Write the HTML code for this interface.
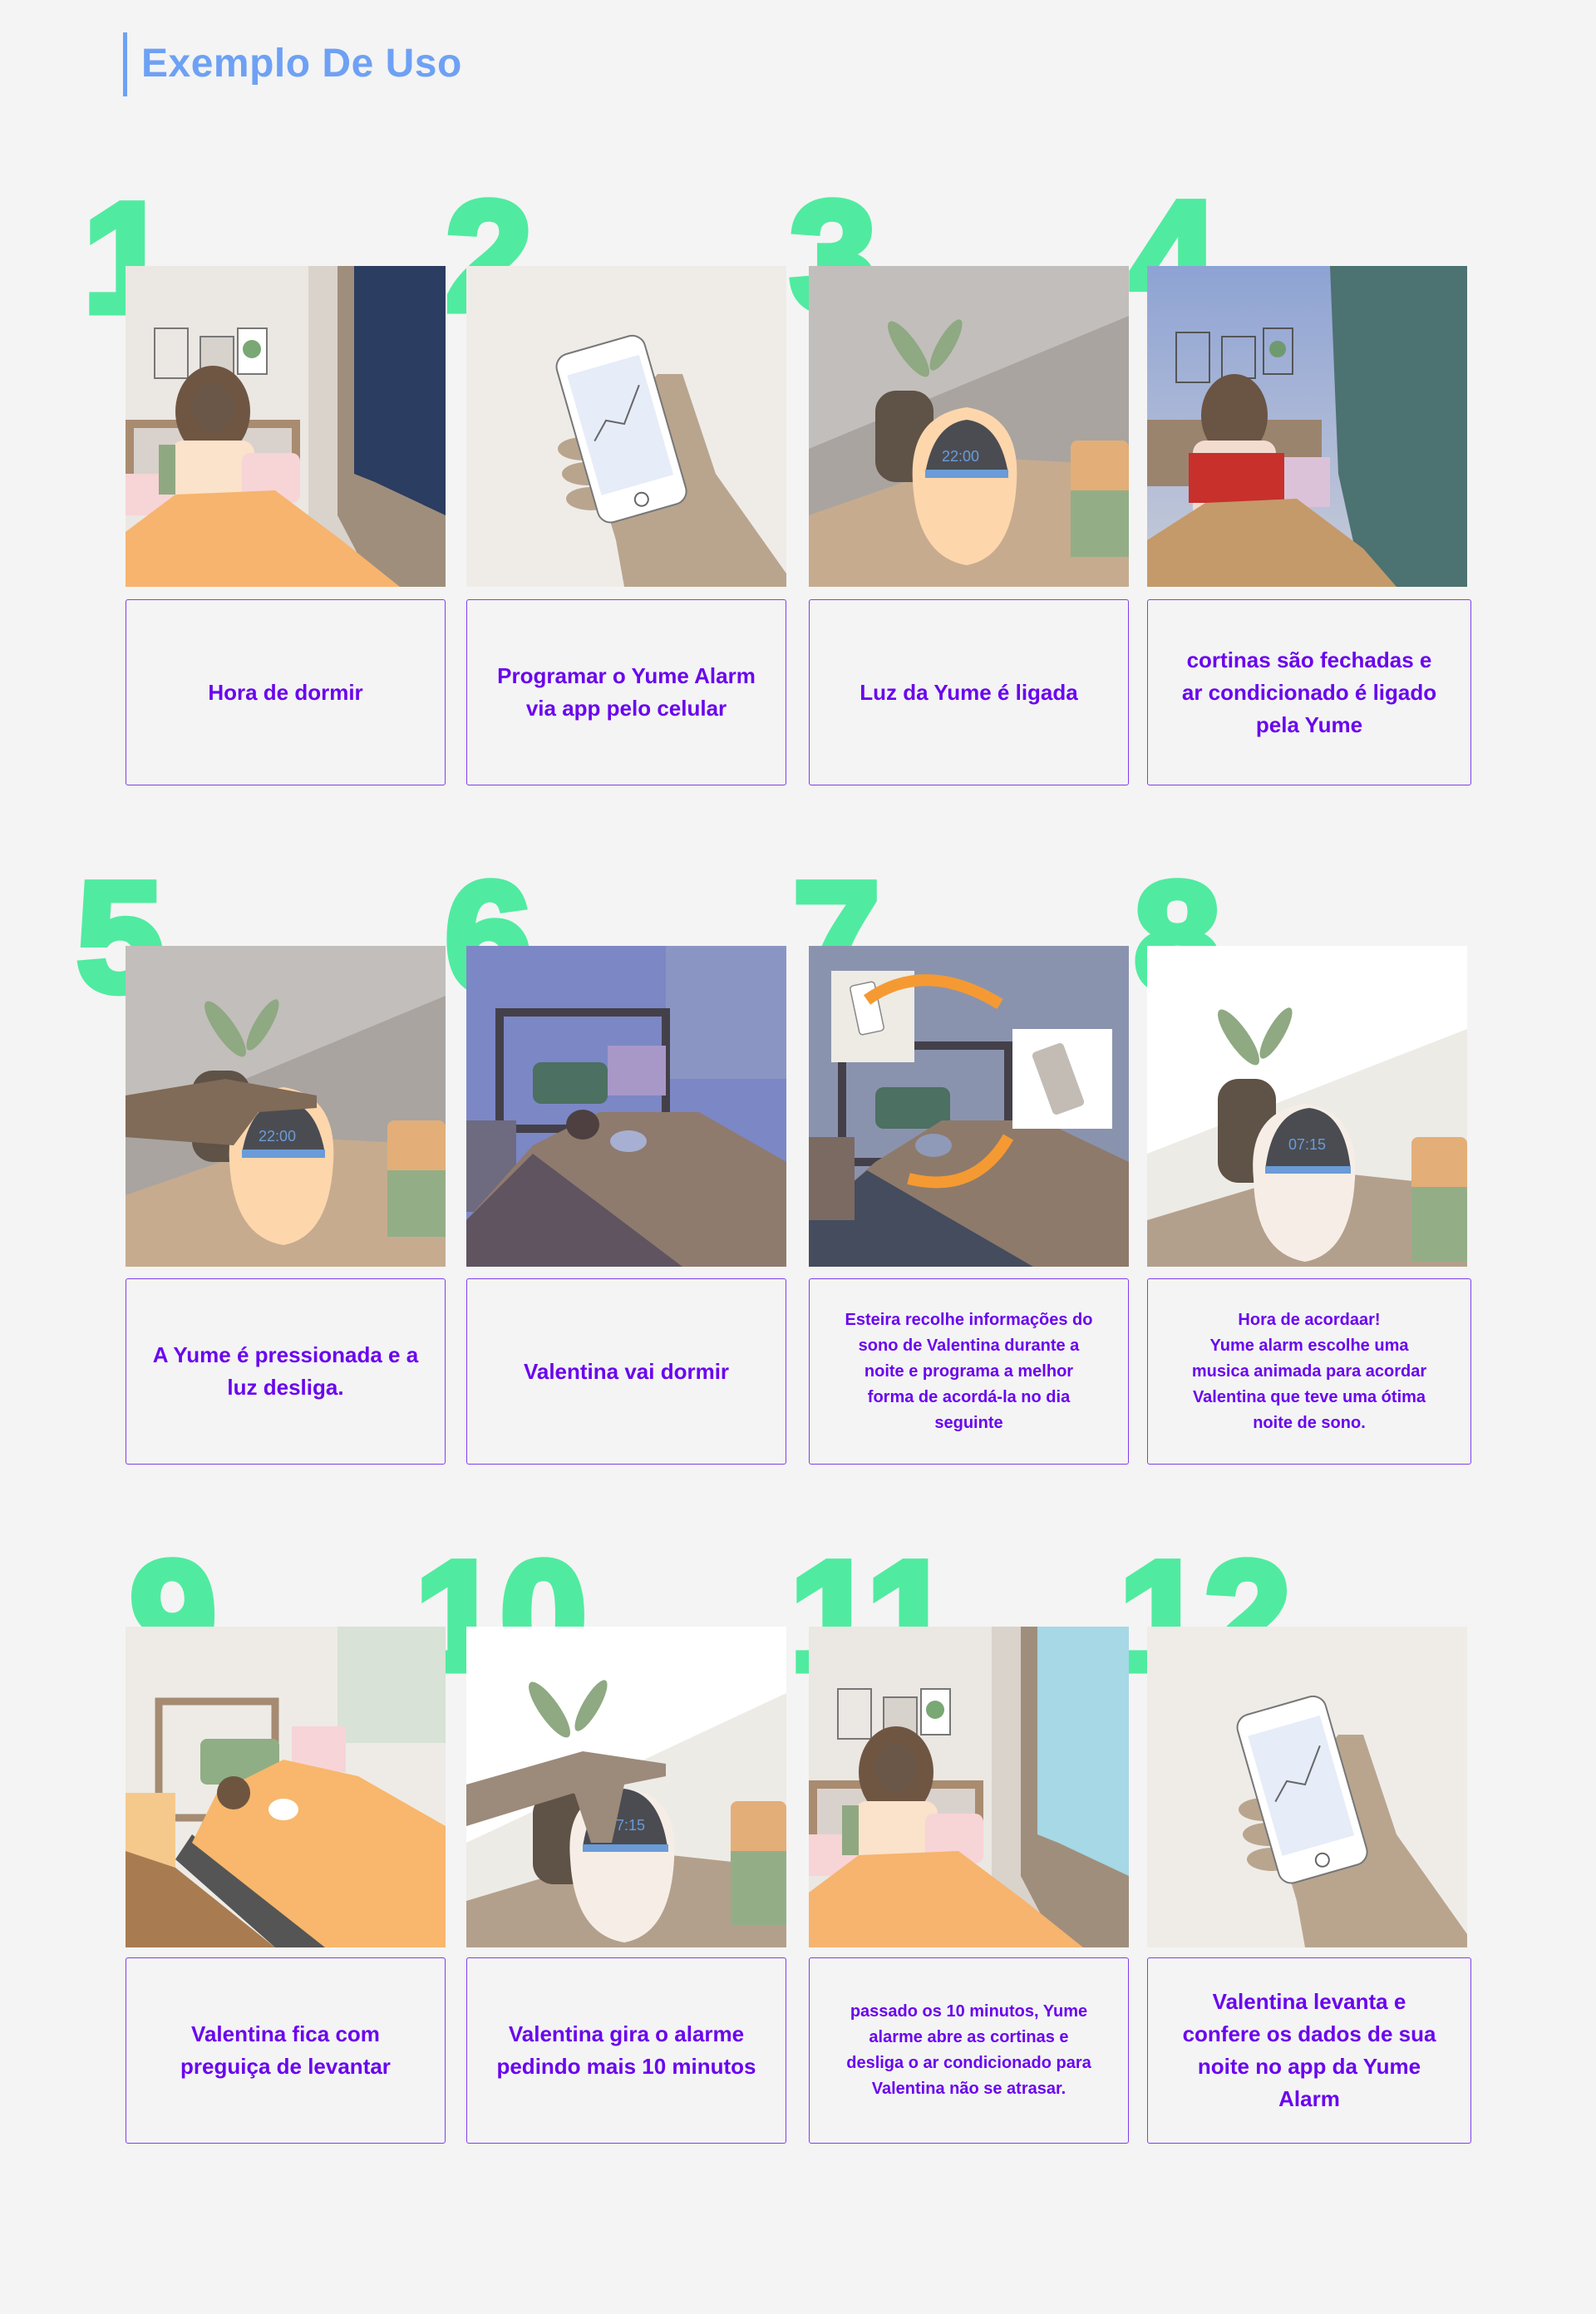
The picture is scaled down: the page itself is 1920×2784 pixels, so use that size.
<!DOCTYPE html>
<html><head><meta charset="utf-8">
<style>
*{margin:0;padding:0;box-sizing:border-box}
body{width:1920px;height:2784px;background:#f4f4f4;position:relative;overflow:hidden;font-family:"Liberation Sans",sans-serif}
.bar{position:absolute;left:148px;top:39px;width:5px;height:77px;background:#6ea1f4}
h1{position:absolute;left:170px;top:49px;font-size:48px;font-weight:bold;color:#6ea1f4;letter-spacing:0.5px}
.num{position:absolute;font-size:188px;font-weight:900;color:#50eba0;line-height:1;letter-spacing:-2px;-webkit-text-stroke:9px #50eba0}
.img{position:absolute;width:385px;height:386px;overflow:hidden}
.img svg{display:block;width:100%;height:100%}
.cap{position:absolute;width:385px;height:224px;border:1.5px solid #7f3ef0;border-radius:3px;display:flex;align-items:center;justify-content:center;text-align:center;color:#6a05ee;font-weight:bold;font-size:26px;line-height:39px;white-space:nowrap}
.cap.s{font-size:20px;line-height:31px}
</style></head><body>
<div class="bar"></div><h1>Exemplo De Uso</h1>

<div class="num" style="left:100px;top:216px">1</div>
<div class="num" style="left:536px;top:214px">2</div>
<div class="num" style="left:950px;top:214px">3</div>
<div class="num" style="left:1360px;top:214px">4</div>
<div class="num" style="left:92px;top:1033px">5</div>
<div class="num" style="left:535px;top:1033px">6</div>
<div class="num" style="left:954px;top:1033px">7</div>
<div class="num" style="left:1364px;top:1033px">8</div>
<div class="num" style="left:156px;top:1850px">9</div>
<div class="num" style="left:499px;top:1850px">10</div>
<div class="num" style="left:950px;top:1850px">11</div>
<div class="num" style="left:1346px;top:1850px">12</div>

<!-- Row 1 -->
<div class="img" style="left:151px;top:320px"><svg viewBox="0 0 385 386">
<rect width="385" height="386" fill="#ebe7e2"/><rect x="220" width="60" height="386" fill="#d9d3cc"/>
<polygon points="255,0 385,0 385,386 300,386 255,300" fill="#a08e7c"/><polygon points="275,0 385,0 385,300 300,260 275,250" fill="#2b3d60"/>
<rect x="35" y="75" width="40" height="60" fill="none" stroke="#777" stroke-width="2"/><rect x="90" y="85" width="40" height="50" fill="#d8d2cc" stroke="#777" stroke-width="2"/><rect x="135" y="75" width="35" height="55" fill="#fff" stroke="#777" stroke-width="2"/><circle cx="152" cy="100" r="11" fill="#7aa874"/>
<rect x="0" y="185" width="210" height="80" fill="#a98b70"/><rect x="10" y="195" width="190" height="80" fill="#d9d2cc"/>
<ellipse cx="105" cy="175" rx="45" ry="55" fill="#6f5643"/><ellipse cx="105" cy="170" rx="25" ry="30" fill="#6b5748"/>
<rect x="55" y="210" width="100" height="100" rx="15" fill="#fbe2cb"/><rect x="140" y="225" width="70" height="60" rx="10" fill="#f7d4d6"/><rect x="0" y="250" width="60" height="50" fill="#f7d4d6"/><rect x="40" y="215" width="20" height="60" fill="#90a882"/>
<polygon points="0,320 60,275 180,270 260,330 330,386 0,386" fill="#f6b46e"/></svg></div>
<div class="img" style="left:561px;top:320px"><svg viewBox="0 0 385 386">
<rect width="385" height="386" fill="#efece8"/>
<polygon points="150,230 230,130 260,130 300,250 385,370 385,386 190,386 180,330" fill="#b9a58e"/>
<ellipse cx="140" cy="220" rx="30" ry="14" fill="#b9a58e"/><ellipse cx="145" cy="250" rx="30" ry="14" fill="#b9a58e"/><ellipse cx="150" cy="280" rx="30" ry="14" fill="#b9a58e"/>
<g transform="rotate(-16 190 190)"><rect x="130" y="90" width="110" height="210" rx="16" fill="#fff" stroke="#777" stroke-width="2"/><rect x="140" y="115" width="90" height="150" fill="#e6ecf8"/><polyline points="150,200 170,180 190,190 220,150" fill="none" stroke="#666" stroke-width="2"/><circle cx="185" cy="283" r="8" fill="none" stroke="#666" stroke-width="2"/></g></svg></div>
<div class="img" style="left:973px;top:320px"><svg viewBox="0 0 385 386">
<rect width="385" height="386" fill="#c2bebb"/><polygon points="0,220 385,60 385,386 0,386" fill="#a9a4a0"/>
<polygon points="0,300 200,230 385,240 385,386 0,386" fill="#c6ab8f"/>
<ellipse cx="120" cy="100" rx="12" ry="40" fill="#8fa983" transform="rotate(-35 120 100)"/><ellipse cx="165" cy="95" rx="10" ry="35" fill="#8fa983" transform="rotate(30 165 95)"/>
<rect x="80" y="150" width="70" height="110" rx="25" fill="#5f5246"/>
<path d="M125,260 Q120,180 190,170 Q255,180 250,260 Q245,350 190,360 Q130,350 125,260Z" fill="#fdd6ac"/>
<path d="M140,250 Q150,190 190,185 Q230,190 240,250Z" fill="#4a4c52"/><rect x="140" y="245" width="100" height="10" fill="#6b9bd8"/><text x="160" y="235" font-size="18" fill="#6b9bd8">22:00</text>
<rect x="315" y="210" width="70" height="140" rx="8" fill="#e3ae78"/><rect x="315" y="270" width="70" height="80" fill="#93ae87"/></svg></div>
<div class="img" style="left:1380px;top:320px"><svg viewBox="0 0 385 386"><defs><linearGradient id="g4" x1="0" y1="0" x2="0" y2="1"><stop offset="0" stop-color="#8ea3d4"/><stop offset="1" stop-color="#c8ccd8"/></linearGradient></defs>
<rect width="385" height="386" fill="url(#g4)"/><polygon points="220,0 385,0 385,386 260,386 230,250" fill="#4d7272"/>
<rect x="35" y="80" width="40" height="60" fill="none" stroke="#555" stroke-width="2"/><rect x="90" y="85" width="40" height="50" fill="none" stroke="#555" stroke-width="2"/><rect x="140" y="75" width="35" height="55" fill="none" stroke="#555" stroke-width="2"/><circle cx="157" cy="100" r="10" fill="#6f9a70"/>
<rect x="0" y="185" width="210" height="80" fill="#9b846e"/><ellipse cx="105" cy="180" rx="40" ry="50" fill="#6a5443"/>
<rect x="55" y="210" width="100" height="100" rx="15" fill="#f2dcd0"/><rect x="150" y="230" width="70" height="60" fill="#dcc2d8"/><rect x="50" y="225" width="115" height="60" fill="#c8302c"/>
<polygon points="0,330 70,285 180,280 260,340 300,386 0,386" fill="#c49a6a"/></svg></div>
<div class="cap" style="left:151px;top:721px">Hora de dormir</div>
<div class="cap" style="left:561px;top:721px">Programar o Yume Alarm<br>via app pelo celular</div>
<div class="cap" style="left:973px;top:721px">Luz da Yume é ligada</div>
<div class="cap" style="left:1380px;top:721px;width:390px">cortinas são fechadas e<br>ar condicionado é ligado<br>pela Yume</div>

<!-- Row 2 -->
<div class="img" style="left:151px;top:1138px"><svg viewBox="0 0 385 386">
<rect width="385" height="386" fill="#c2bebb"/><polygon points="0,220 385,60 385,386 0,386" fill="#a9a4a0"/>
<polygon points="0,300 200,230 385,240 385,386 0,386" fill="#c6ab8f"/>
<ellipse cx="120" cy="100" rx="12" ry="40" fill="#8fa983" transform="rotate(-35 120 100)"/><ellipse cx="165" cy="95" rx="10" ry="35" fill="#8fa983" transform="rotate(30 165 95)"/>
<rect x="80" y="150" width="70" height="110" rx="25" fill="#5f5246"/>
<path d="M125,260 Q120,180 190,170 Q255,180 250,260 Q245,350 190,360 Q130,350 125,260Z" fill="#fdd6ac"/>
<path d="M140,250 Q150,190 190,185 Q230,190 240,250Z" fill="#4a4c52"/><rect x="140" y="245" width="100" height="10" fill="#6b9bd8"/><text x="160" y="235" font-size="18" fill="#6b9bd8">22:00</text>
<polygon points="0,180 120,160 230,180 230,195 160,200 130,240 0,230" fill="#806a58"/>
<rect x="315" y="210" width="70" height="140" rx="8" fill="#e3ae78"/><rect x="315" y="270" width="70" height="80" fill="#93ae87"/></svg></div>
<div class="img" style="left:561px;top:1138px"><svg viewBox="0 0 385 386">
<rect width="385" height="386" fill="#7c87c6"/><rect x="240" width="145" height="160" fill="#8b95c4"/>
<rect x="40" y="80" width="200" height="140" fill="none" stroke="#44404a" stroke-width="10"/>
<rect x="80" y="140" width="90" height="50" rx="10" fill="#4c7062"/><rect x="170" y="120" width="70" height="60" fill="#a798c8"/>
<rect x="0" y="210" width="60" height="110" fill="#6e6a80"/>
<polygon points="0,330 80,240 160,200 280,200 385,260 385,386 0,386" fill="#8f7a6e"/><polygon points="0,330 80,250 260,386 0,386" fill="#5f5460"/>
<ellipse cx="140" cy="215" rx="20" ry="18" fill="#4e4040"/><ellipse cx="195" cy="235" rx="22" ry="13" fill="#a7b0d2"/></svg></div>
<div class="img" style="left:973px;top:1138px"><svg viewBox="0 0 385 386">
<rect width="385" height="386" fill="#8a93ae"/>
<rect x="40" y="120" width="200" height="140" fill="none" stroke="#44404a" stroke-width="10"/>
<rect x="80" y="170" width="90" height="50" rx="10" fill="#4c7062"/>
<polygon points="0,330 80,260 160,210 280,210 385,260 385,386 0,386" fill="#8e7a6b"/><polygon points="0,330 70,270 270,386 0,386" fill="#444c5e"/>
<rect x="0" y="230" width="55" height="100" fill="#7a6a62"/>
<rect x="27" y="30" width="100" height="110" fill="#eeeae4"/><rect x="245" y="100" width="120" height="120" fill="#fff"/>
<rect x="280" y="120" width="40" height="80" rx="5" fill="#c2bcb4" transform="rotate(-20 300 160)"/><rect x="55" y="45" width="30" height="60" rx="4" fill="#fff" stroke="#888" stroke-width="1.5" transform="rotate(-12 70 75)"/>
<path d="M70,65 Q140,15 230,70" fill="none" stroke="#f59a32" stroke-width="14"/><path d="M120,280 Q200,300 240,230" fill="none" stroke="#f59a32" stroke-width="14"/>
<ellipse cx="150" cy="240" rx="22" ry="14" fill="#8f9ab8"/></svg></div>
<div class="img" style="left:1380px;top:1138px"><svg viewBox="0 0 385 386">
<rect width="385" height="386" fill="#fff"/><polygon points="0,250 385,100 385,386 0,386" fill="#edebe6"/>
<polygon points="0,330 200,270 385,290 385,386 0,386" fill="#b3a08c"/>
<ellipse cx="110" cy="110" rx="12" ry="40" fill="#8fa983" transform="rotate(-35 110 110)"/><ellipse cx="155" cy="105" rx="10" ry="35" fill="#8fa983" transform="rotate(30 155 105)"/>
<rect x="85" y="160" width="70" height="125" rx="25" fill="#5f5246"/>
<path d="M128,280 Q120,200 190,190 Q255,200 250,280 Q245,370 190,380 Q130,370 128,280Z" fill="#f6eee6"/>
<path d="M142,270 Q150,200 195,195 Q238,200 245,270Z" fill="#4a4c52"/><rect x="142" y="265" width="103" height="9" fill="#6b9bd8"/><text x="170" y="245" font-size="18" fill="#6b9bd8">07:15</text>
<rect x="318" y="230" width="67" height="150" rx="8" fill="#e3ae78"/><rect x="318" y="290" width="67" height="90" fill="#93ae87"/></svg></div>
<div class="cap" style="left:151px;top:1538px">A Yume é pressionada e a<br>luz desliga.</div>
<div class="cap" style="left:561px;top:1538px">Valentina vai dormir</div>
<div class="cap s" style="left:973px;top:1538px">Esteira recolhe informações do<br>sono de Valentina durante a<br>noite e programa a melhor<br>forma de acordá-la no dia<br>seguinte</div>
<div class="cap s" style="left:1380px;top:1538px;width:390px">Hora de acordaar!<br>Yume alarm escolhe uma<br>musica animada para acordar<br>Valentina que teve uma ótima<br>noite de sono.</div>

<!-- Row 3 -->
<div class="img" style="left:151px;top:1957px"><svg viewBox="0 0 385 386">
<rect width="385" height="386" fill="#eeebe6"/><rect x="255" width="130" height="140" fill="#d8e2d6"/>
<rect x="40" y="90" width="140" height="140" fill="none" stroke="#a58b72" stroke-width="9"/>
<rect x="90" y="135" width="95" height="55" rx="8" fill="#8fae85"/><rect x="200" y="120" width="65" height="55" fill="#f7d4d8"/>
<rect x="0" y="200" width="60" height="90" fill="#f5c98c"/>
<polygon points="0,270 60,290 180,386 0,386" fill="#a97b50"/><polygon points="60,280 180,386 250,386 80,250" fill="#555"/>
<polygon points="80,260 110,200 190,160 280,180 385,240 385,386 240,386" fill="#f8b76c"/>
<ellipse cx="130" cy="200" rx="20" ry="20" fill="#6e5540"/><ellipse cx="190" cy="220" rx="18" ry="13" fill="#fff"/></svg></div>
<div class="img" style="left:561px;top:1957px"><svg viewBox="0 0 385 386">
<rect width="385" height="386" fill="#fff"/><polygon points="0,260 385,80 385,386 0,386" fill="#edebe6"/>
<polygon points="0,330 200,270 385,290 385,386 0,386" fill="#b3a08c"/>
<ellipse cx="100" cy="100" rx="12" ry="40" fill="#8fa983" transform="rotate(-35 100 100)"/><ellipse cx="150" cy="95" rx="10" ry="35" fill="#8fa983" transform="rotate(30 150 95)"/>
<rect x="80" y="200" width="70" height="110" rx="25" fill="#5f5246"/>
<path d="M125,280 Q118,200 190,195 Q255,200 250,280 Q245,370 190,380 Q130,370 125,280Z" fill="#f6eee6"/>
<path d="M140,265 Q150,200 190,195 Q232,200 242,265Z" fill="#4a4c52"/><rect x="140" y="262" width="103" height="9" fill="#6b9bd8"/><text x="170" y="245" font-size="18" fill="#6b9bd8">07:15</text>
<polygon points="0,190 140,150 240,165 240,180 190,190 175,260 150,260 130,200 0,240" fill="#9c8a7a"/>
<rect x="318" y="210" width="67" height="150" rx="8" fill="#e3ae78"/><rect x="318" y="270" width="67" height="90" fill="#93ae87"/></svg></div>
<div class="img" style="left:973px;top:1957px"><svg viewBox="0 0 385 386">
<rect width="385" height="386" fill="#ebe7e2"/><rect x="220" width="60" height="386" fill="#d9d3cc"/>
<polygon points="255,0 385,0 385,386 300,386 255,300" fill="#a08e7c"/><polygon points="275,0 385,0 385,300 300,260 275,250" fill="#a6d8e6"/>
<rect x="35" y="75" width="40" height="60" fill="none" stroke="#777" stroke-width="2"/><rect x="90" y="85" width="40" height="50" fill="#d8d2cc" stroke="#777" stroke-width="2"/><rect x="135" y="75" width="35" height="55" fill="#fff" stroke="#777" stroke-width="2"/><circle cx="152" cy="100" r="11" fill="#7aa874"/>
<rect x="0" y="185" width="210" height="80" fill="#a98b70"/><rect x="10" y="195" width="190" height="80" fill="#d9d2cc"/>
<ellipse cx="105" cy="175" rx="45" ry="55" fill="#6f5643"/><ellipse cx="105" cy="170" rx="25" ry="30" fill="#6b5748"/>
<rect x="55" y="210" width="100" height="100" rx="15" fill="#fbe2cb"/><rect x="140" y="225" width="70" height="60" rx="10" fill="#f7d4d6"/><rect x="0" y="250" width="60" height="50" fill="#f7d4d6"/><rect x="40" y="215" width="20" height="60" fill="#90a882"/>
<polygon points="0,320 60,275 180,270 260,330 330,386 0,386" fill="#f6b46e"/></svg></div>
<div class="img" style="left:1380px;top:1957px"><svg viewBox="0 0 385 386">
<rect width="385" height="386" fill="#efece8"/>
<polygon points="150,230 230,130 260,130 300,250 385,370 385,386 190,386 180,330" fill="#b9a58e"/>
<ellipse cx="140" cy="220" rx="30" ry="14" fill="#b9a58e"/><ellipse cx="145" cy="250" rx="30" ry="14" fill="#b9a58e"/><ellipse cx="150" cy="280" rx="30" ry="14" fill="#b9a58e"/>
<g transform="rotate(-16 190 190)"><rect x="130" y="90" width="110" height="210" rx="16" fill="#fff" stroke="#777" stroke-width="2"/><rect x="140" y="115" width="90" height="150" fill="#e6ecf8"/><polyline points="150,200 170,180 190,190 220,150" fill="none" stroke="#666" stroke-width="2"/><circle cx="185" cy="283" r="8" fill="none" stroke="#666" stroke-width="2"/></g></svg></div>
<div class="cap" style="left:151px;top:2355px">Valentina fica com<br>preguiça de levantar</div>
<div class="cap" style="left:561px;top:2355px">Valentina gira o alarme<br>pedindo mais 10 minutos</div>
<div class="cap s" style="left:973px;top:2355px">passado os 10 minutos, Yume<br>alarme abre as cortinas e<br>desliga o ar condicionado para<br>Valentina não se atrasar.</div>
<div class="cap" style="left:1380px;top:2355px;width:390px">Valentina levanta e<br>confere os dados de sua<br>noite no app da Yume<br>Alarm</div>
</body></html>
